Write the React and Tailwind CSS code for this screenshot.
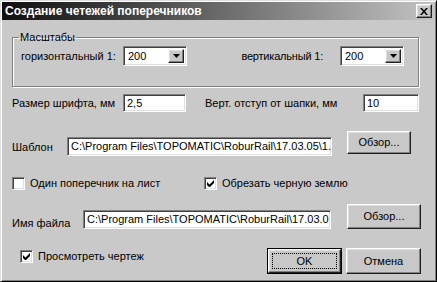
const FONT = "font-['Liberation_Sans',Arial,sans-serif]";

const SUNKEN =
    'bg-white border border-t-[#808080] border-l-[#808080] border-b-white border-r-white shadow-[inset_1px_1px_0_#404040,inset_-1px_-1px_0_#dfdfdf]';
const RAISED =
    'bg-[#c8c8c8] border border-t-white border-l-white border-b-[#202020] border-r-[#202020] shadow-[inset_-1px_-1px_0_#808080,inset_1px_1px_0_#dfdfdf]';

function Field({ value, className }) {
    return (
        <div className={`${SUNKEN} ${className} flex items-center pl-[3px] overflow-hidden whitespace-nowrap leading-[13px]`}>
            {value}
        </div>
    );
}

function Combo({ value, className }) {
    return (
        <div className={`${SUNKEN} ${className} flex items-stretch p-[2px]`}>
            <div className="flex-1 flex items-center pl-[2px] leading-[13px]">{value}</div>
            <div className={`${RAISED} w-[16px] flex items-center justify-center`}>
                <svg width="7" height="4" viewBox="0 0 7 4">
                    <path d="M0 0h7L3.5 4z" fill="#000" />
                </svg>
            </div>
        </div>
    );
}

function Check({ checked, className = '' }) {
    return (
        <div className={`${SUNKEN} w-[13px] h-[13px] shrink-0 flex items-center justify-center ${className}`}>
            {checked && (
                <svg width="7" height="7" viewBox="0 0 7 7">
                    <path d="M0 2v3l2 2h1l4-4V0L2.5 4.5z" fill="#000" />
                </svg>
            )}
        </div>
    );
}

function Button({ children, className }) {
    return (
        <div className={`${RAISED} ${className} flex items-center justify-center leading-[13px]`}>
            {children}
        </div>
    );
}

export default function App() {
    return (
        <div className={`${FONT} w-[437px] h-[282px] bg-[#c9c9c9] text-[11px] text-black border border-t-[#dfdfdf] border-l-[#dfdfdf] border-r-black border-b-black shadow-[inset_1px_1px_0_#fff,inset_-1px_-1px_0_#808080] p-[1px] flex flex-col`}>
            {/* Title bar */}
            <div className="h-[18px] shrink-0 bg-linear-to-r from-[#101010] via-[#6a6a6a] to-[#c4c4c4] flex items-center justify-between pl-[3px] pr-[3px]">
                <span className="text-white font-bold text-[12px] leading-none">Создание четежей поперечников</span>
                <div className={`${RAISED} w-[16px] h-[14px] flex items-center justify-center`}>
                    <svg width="8" height="7" viewBox="0 0 8 7">
                        <path d="M0 0h2l2 2.5L6 0h2L5 3.5 8 7H6L4 4.5 2 7H0l3-3.5z" fill="#000" />
                    </svg>
                </div>
            </div>

            {/* Масштабы */}
            <fieldset className="ml-[10px] mt-[11px] w-[407px] h-[56px] border border-[#808080] shadow-[inset_1px_1px_0_#fff,1px_1px_0_#fff]">
                <legend className="ml-[6px] px-[1px] leading-[13px]">Масштабы</legend>
                <div className="flex items-center h-[20px] mt-[2px] whitespace-nowrap">
                    <span className="ml-[8px] w-[102px] shrink-0">горизонтальный 1:</span>
                    <Combo value="200" className="w-[64px] h-[20px] shrink-0" />
                    <span className="w-[153px] shrink-0 flex justify-end pr-[17px] tracking-[-0.2px]">вертикальный 1:</span>
                    <Combo value="200" className="w-[64px] h-[20px] shrink-0" />
                </div>
            </fieldset>

            {/* Размер шрифта / отступ */}
            <div className="flex items-center h-[18px] mt-[7px] whitespace-nowrap">
                <span className="ml-[10px] w-[111px] shrink-0">Размер шрифта, мм</span>
                <Field value="2,5" className="w-[63px] h-[18px] shrink-0" />
                <span className="ml-[19px] w-[158px] shrink-0">Верт. отступ от шапки, мм</span>
                <Field value="10" className="w-[56px] h-[18px] shrink-0" />
            </div>

            {/* Шаблон */}
            <div className="flex items-start h-[25px] mt-[19px]">
                <span className="ml-[10px] mt-[10px] w-[55px] shrink-0 leading-[13px]">Шаблон</span>
                <Field value="C:\Program Files\TOPOMATIC\RoburRail\17.03.05\1." className="mt-[6px] w-[265px] h-[19px] shrink-0" />
                <Button className="ml-[15px] w-[64px] h-[23px] shrink-0">Обзор...</Button>
            </div>

            {/* Checkboxes */}
            <div className="flex items-center h-[13px] mt-[21px] whitespace-nowrap">
                <div className="ml-[10px] w-[192px] shrink-0 flex items-center">
                    <Check />
                    <span className="ml-[5px] leading-[13px]">Один поперечник на лист</span>
                </div>
                <Check checked />
                <span className="ml-[5px] leading-[13px]">Обрезать черную землю</span>
            </div>

            {/* Имя файла */}
            <div className="flex items-start h-[25px] mt-[14px]">
                <span className="ml-[10px] mt-[13px] w-[71px] shrink-0 leading-[13px]">Имя файла</span>
                <Field value="C:\Program Files\TOPOMATIC\RoburRail\17.03.0" className="mt-[6px] w-[248px] h-[19px] shrink-0" />
                <Button className="ml-[16px] w-[74px] h-[25px] shrink-0">Обзор...</Button>
            </div>

            {/* Bottom row */}
            <div className="flex items-start h-[26px] mt-[19px] whitespace-nowrap">
                <div className="ml-[18px] mt-[2px] w-[247px] shrink-0 flex items-center">
                    <Check checked />
                    <span className="ml-[5px] leading-[13px]">Просмотреть чертеж</span>
                </div>
                <div className="w-[75px] h-[26px] shrink-0 border border-black">
                    <div className={`${RAISED} w-full h-full p-[3px]`}>
                        <div className="w-full h-full border border-dotted border-black flex items-center justify-center leading-[13px]">
                            OK
                        </div>
                    </div>
                </div>
                <Button className="ml-[4px] w-[75px] h-[26px] shrink-0">Отмена</Button>
            </div>
        </div>
    );
}
